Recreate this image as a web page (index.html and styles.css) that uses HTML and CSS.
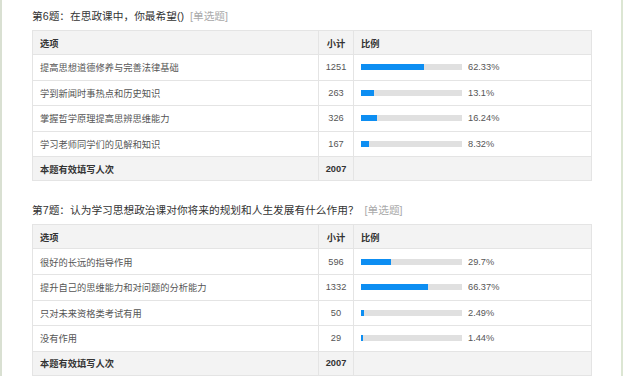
FILE: index.html
```html
<!DOCTYPE html>
<html lang="zh-CN">
<head>
<meta charset="utf-8">
<link rel="stylesheet" href="styles.css">
</head>
<body>
<div class="page">
  <section class="question first">
    <div class="q-title">第6题：在思政课中，你最希望()<span class="q-type">[单选题]</span></div>
    <table class="stat">
      <colgroup><col class="c-opt"><col class="c-num"><col class="c-ratio"></colgroup>
      <thead>
        <tr><th>选项</th><th class="num">小计</th><th>比例</th></tr>
      </thead>
      <tbody>
        <tr><td>提高思想道德修养与完善法律基础</td><td class="num">1251</td><td><div class="ratio"><div class="bar"><div class="fill" style="width:62.33%"></div></div><span>62.33%</span></div></td></tr>
        <tr><td>学到新闻时事热点和历史知识</td><td class="num">263</td><td><div class="ratio"><div class="bar"><div class="fill" style="width:13.1%"></div></div><span>13.1%</span></div></td></tr>
        <tr><td>掌握哲学原理提高思辨思维能力</td><td class="num">326</td><td><div class="ratio"><div class="bar"><div class="fill" style="width:16.24%"></div></div><span>16.24%</span></div></td></tr>
        <tr><td>学习老师同学们的见解和知识</td><td class="num">167</td><td><div class="ratio"><div class="bar"><div class="fill" style="width:8.32%"></div></div><span>8.32%</span></div></td></tr>
      </tbody>
      <tfoot>
        <tr><td>本题有效填写人次</td><td class="num">2007</td><td></td></tr>
      </tfoot>
    </table>
  </section>
  <section class="question">
    <div class="q-title">第7题：认为学习思想政治课对你将来的规划和人生发展有什么作用？<span class="q-type">[单选题]</span></div>
    <table class="stat">
      <colgroup><col class="c-opt"><col class="c-num"><col class="c-ratio"></colgroup>
      <thead>
        <tr><th>选项</th><th class="num">小计</th><th>比例</th></tr>
      </thead>
      <tbody>
        <tr><td>很好的长远的指导作用</td><td class="num">596</td><td><div class="ratio"><div class="bar"><div class="fill" style="width:29.7%"></div></div><span>29.7%</span></div></td></tr>
        <tr><td>提升自己的思维能力和对问题的分析能力</td><td class="num">1332</td><td><div class="ratio"><div class="bar"><div class="fill" style="width:66.37%"></div></div><span>66.37%</span></div></td></tr>
        <tr><td>只对未来资格类考试有用</td><td class="num">50</td><td><div class="ratio"><div class="bar"><div class="fill" style="width:2.49%"></div></div><span>2.49%</span></div></td></tr>
        <tr><td>没有作用</td><td class="num">29</td><td><div class="ratio"><div class="bar"><div class="fill" style="width:1.44%"></div></div><span>1.44%</span></div></td></tr>
      </tbody>
      <tfoot>
        <tr><td>本题有效填写人次</td><td class="num">2007</td><td></td></tr>
      </tfoot>
    </table>
  </section>
</div>
</body>
</html>
```

FILE: styles.css
```css
html, body {
  margin: 0;
  padding: 0;
  background: #ffffff;
}
body {
  font-family: "Liberation Sans", "Noto Sans CJK SC", sans-serif;
  color: #555;
}
.page {
  width: 589px;
  height: 376px;
  overflow: hidden;
  padding-left: 30px;
  border-left: 2px solid #d9e0d2;
  border-right: 2px solid #dce6d3;
}
.question.first {
  padding-top: 6px;
}
.question {
  margin-bottom: 19px;
}
.q-title {
  font-size: 10.7px;
  line-height: 20px;
  height: 20px;
  color: #333;
  margin-bottom: 4px;
  white-space: nowrap;
}
.q-type {
  color: #aaa;
  margin-left: 6px;
}
.stat {
  border-collapse: collapse;
  width: 559px;
  table-layout: fixed;
  font-size: 9.25px;
}
.c-opt { width: 286px; }
.c-num { width: 35px; }
.c-ratio { width: 238px; }
.stat th, .stat td {
  border: 1px solid #e4e4e4;
  padding: 0 0 0 7px;
  text-align: left;
  vertical-align: middle;
  white-space: nowrap;
}
.stat th {
  height: 23px;
  background: #f3f3f3;
  color: #333;
  font-weight: bold;
}
.stat tbody td {
  height: 24.6px;
  background: #fff;
  color: #555;
}
.stat tfoot td {
  height: 23px;
  background: #f3f3f3;
  color: #333;
  font-weight: bold;
}
.stat .num {
  text-align: center;
  padding: 0;
}
.ratio {
  display: flex;
  align-items: center;
  gap: 6px;
  color: #555;
}
.bar {
  width: 101px;
  height: 6px;
  background: #e0e0e0;
  display: flex;
}
.fill {
  height: 100%;
  min-width: 2px;
  background: #0d8ef2;
}
```
